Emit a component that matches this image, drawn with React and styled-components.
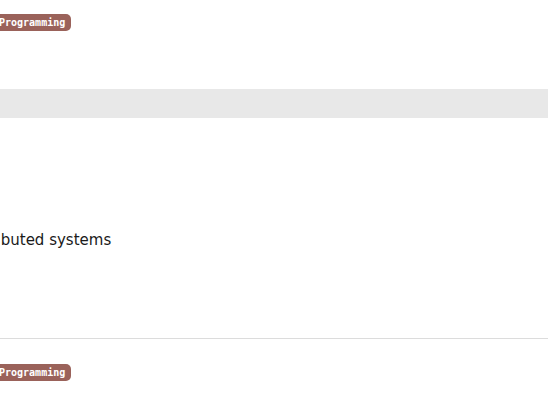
import styled, { createGlobalStyle } from "styled-components";

const GlobalStyle = createGlobalStyle`
    html, body {
        margin: 0;
        padding: 0;
        background: #fff;
        overflow: hidden;
    }
`;

const App = () => {
    return (
        <Page>
            <GlobalStyle />
            <Section>
                <Tag>Programming</Tag>
            </Section>
            <Band />
            <Body>
                <Text>distributed systems</Text>
            </Body>
            <Divider />
            <Section $gap={25}>
                <Tag>Programming</Tag>
            </Section>
        </Page>
    );
};

export default App;

const Page = styled.div`
    width: 548px;
    height: 413px;
    overflow: hidden;
    font-family: "DejaVu Sans", sans-serif;
`;

const Section = styled.div`
    padding-top: ${(p) => p.$gap || 14}px;
    margin-left: -6px;
    display: flex;
`;

const Tag = styled.span`
    display: inline-block;
    height: 17px;
    line-height: 17px;
    padding: 0 6px 0 5px;
    border-radius: 5px;
    background: #9a625a;
    color: #fff;
    font-family: "DejaVu Sans Mono", monospace;
    font-weight: bold;
    font-size: 10px;
`;

const Band = styled.div`
    margin-top: 58px;
    height: 29px;
    background: #e8e8e8;
`;

const Body = styled.div`
    height: 220px;
    padding-top: 112px;
    box-sizing: border-box;
    overflow: hidden;
`;

const Text = styled.p`
    margin: 0 0 0 -37px;
    font-size: 15px;
    line-height: 20px;
    color: #1a1a1a;
    white-space: nowrap;
`;

const Divider = styled.div`
    height: 1px;
    background: #dcdcdc;
`;
